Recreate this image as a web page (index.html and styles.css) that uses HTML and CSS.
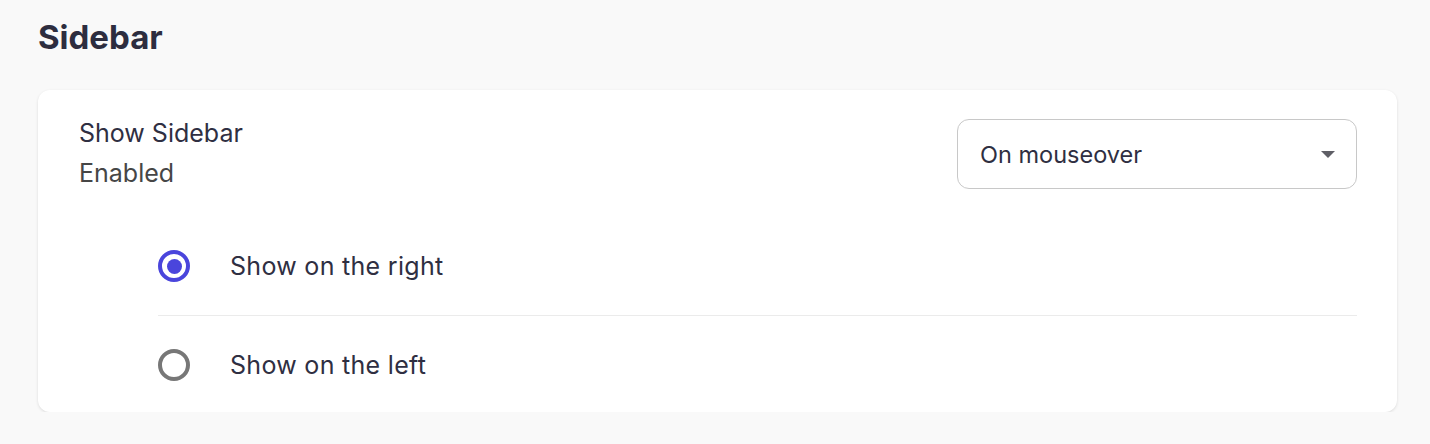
FILE: index.html
```html
<!DOCTYPE html>
<html>
<head>
    <link rel="stylesheet" href="styles.css">
</head>
<body>
    <h2 class="section-title">Sidebar</h2>
    <div class="card">
        <div class="setting-row">
            <div class="setting-text">
                <div class="setting-name">Show Sidebar</div>
                <div class="setting-state">Enabled</div>
            </div>
            <div class="select-box">
                <span>On mouseover</span>
                <svg class="caret" width="14" height="7" viewBox="0 0 14 7"><path d="M0 0H14L7 7Z" fill="#5f5f66"/></svg>
            </div>
        </div>
        <div class="options">
            <label class="option">
                <span class="radio checked"></span>
                <span class="option-label">Show on the right</span>
            </label>
            <label class="option">
                <span class="radio"></span>
                <span class="option-label">Show on the left</span>
            </label>
        </div>
    </div>
</body>
</html>
```
FILE: styles.css
```css
body {
    margin: 0;
    padding: 0 33px 0 38px;
    background-color: #f9f9f9;
    font-family: Inter, "Noto Sans", sans-serif;
    color: #2f2f42;
}
.section-title {
    margin: 0;
    padding-top: 17px;
    height: 90px;
    box-sizing: border-box;
    font-size: 33px;
    font-weight: 700;
    line-height: 40px;
    color: #2d2d3f;
}
.card {
    background-color: #fff;
    border-radius: 12px;
    box-shadow: 0 1px 3px rgba(0, 0, 0, 0.12);
    padding: 29px 40px 0 41px;
    height: 322px;
    box-sizing: border-box;
}
.setting-row {
    display: flex;
    justify-content: space-between;
    align-items: flex-start;
}
.setting-text {
    margin-top: -6px;
    font-size: 25px;
    line-height: 40px;
}
.setting-state {
    color: #464646;
}
.select-box {
    width: 400px;
    height: 70px;
    box-sizing: border-box;
    border: 1.5px solid #c8c8c8;
    border-radius: 12px;
    display: flex;
    align-items: center;
    justify-content: space-between;
    padding: 0 21px 0 22px;
    font-size: 23.5px;
}
.options {
    margin-top: 24px;
    margin-left: 79px;
}
.option {
    display: flex;
    align-items: center;
    height: 98px;
    font-size: 25px;
    letter-spacing: 0.3px;
}
.option + .option {
    border-top: 1.5px solid #ebebeb;
}
.radio {
    width: 32px;
    height: 32px;
    box-sizing: border-box;
    border-radius: 50%;
    border: 4px solid #777;
    margin-right: 40px;
    display: flex;
    align-items: center;
    justify-content: center;
}
.radio.checked {
    border-color: #4a45dc;
}
.radio.checked::after {
    content: "";
    width: 15px;
    height: 15px;
    border-radius: 50%;
    background-color: #4a45dc;
}
```
